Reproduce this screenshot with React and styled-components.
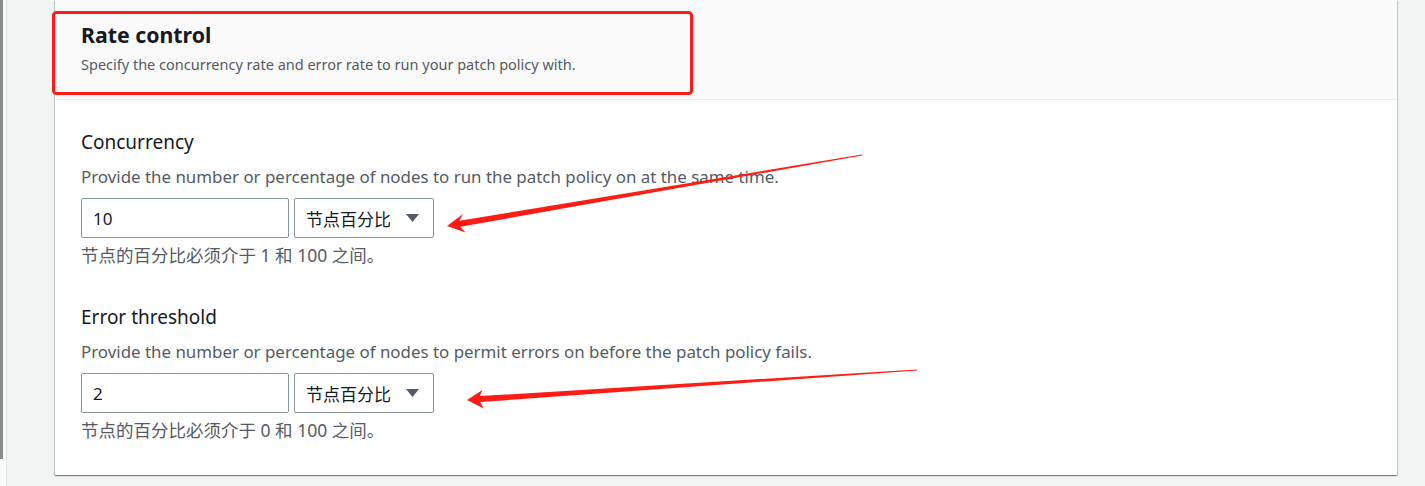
import styled, { createGlobalStyle } from 'styled-components';

const GlobalStyle = createGlobalStyle`
  html, body {
    margin: 0;
    padding: 0;
    background: #f2f3f3;
  }
  body {
    font-family: 'Noto Sans', 'Noto Sans CJK SC', sans-serif;
    color: #16191f;
  }
`;

const fields = [
  {
    label: 'Concurrency',
    description:
      'Provide the number or percentage of nodes to run the patch policy on at the same time.',
    value: '10',
    unit: '节点百分比',
    help: '节点的百分比必须介于 1 和 100 之间。',
  },
  {
    label: 'Error threshold',
    description:
      'Provide the number or percentage of nodes to permit errors on before the patch policy fails.',
    value: '2',
    unit: '节点百分比',
    help: '节点的百分比必须介于 0 和 100 之间。',
  },
];

function Field({ label, description, value, unit, help }) {
  return (
    <FieldGroup>
      <Label>{label}</Label>
      <Description>{description}</Description>
      <Controls>
        <Input>{value}</Input>
        <Select>
          <span>{unit}</span>
          <svg width='13' height='8' viewBox='0 0 13 8'>
            <path d='M0 0 H13 L6.5 8 Z' fill='#545b64' />
          </svg>
        </Select>
      </Controls>
      <Help>{help}</Help>
    </FieldGroup>
  );
}

function App() {
  return (
    <>
      <GlobalStyle />
      <Page>
        <LeftRail>
          <RailBar />
        </LeftRail>
        <Card>
          <Header>
            <Title>Rate control</Title>
            <Subtitle>
              Specify the concurrency rate and error rate to run your patch
              policy with.
            </Subtitle>
          </Header>
          <Body>
            {fields.map((f) => (
              <Field key={f.label} {...f} />
            ))}
          </Body>
        </Card>
        <Annotations width='1425' height='486' viewBox='0 0 1425 486'>
          <rect
            x='53.5'
            y='12.5'
            width='638'
            height='81'
            rx='3'
            fill='none'
            stroke='#ff1c14'
            strokeWidth='3'
          />
          <polygon
            fill='#ff1c14'
            points='447,226 463,214 459.3,220.8 862,154.6 862,155.4 460.3,226.8 465.5,232.5'
          />
          <polygon
            fill='#ff1c14'
            points='467,400 482.5,390 479.8,396.1 917,369.6 917,370.4 480.2,402.1 483.5,408.5'
          />
        </Annotations>
      </Page>
    </>
  );
}

const Page = styled.div`
  position: relative;
  display: flex;
  align-items: flex-start;
  width: 1425px;
  height: 486px;
  overflow: hidden;
`;

const LeftRail = styled.div`
  width: 6px;
  height: 486px;
  flex-shrink: 0;
  display: flex;
  background: #fafafa;
  border-right: 1px solid #e1e4e4;
`;

const RailBar = styled.div`
  width: 3px;
  height: 459px;
  background: #8a8a8a;
`;

const Card = styled.div`
  margin-left: 48px;
  width: 1342px;
  background: #fff;
  box-shadow: 0 1px 1px 0 rgba(0, 28, 36, 0.3),
    1px 1px 1px 0 rgba(0, 28, 36, 0.15), -1px 1px 1px 0 rgba(0, 28, 36, 0.15);
`;

const Header = styled.div`
  background: #fafafa;
  border-bottom: 1px solid #eaeded;
  padding: 22px 26px 25px;
  display: flex;
  flex-direction: column;
  gap: 6px;
`;

const Title = styled.h2`
  margin: 0;
  font-size: 21.3px;
  line-height: 26px;
  font-weight: 700;
  color: #16191f;
`;

const Subtitle = styled.p`
  margin: 0;
  font-size: 14.5px;
  line-height: 20px;
  color: #545b64;
`;

const Body = styled.div`
  padding: 30px 26px 35px;
  display: flex;
  flex-direction: column;
  gap: 40px;
`;

const FieldGroup = styled.div`
  display: flex;
  flex-direction: column;
`;

const Label = styled.div`
  font-size: 19px;
  line-height: 24px;
  color: #16191f;
`;

const Description = styled.div`
  margin-top: 12px;
  font-size: 16.9px;
  line-height: 22px;
  color: #545b64;
`;

const Controls = styled.div`
  margin-top: 10px;
  display: flex;
  gap: 5px;
`;

const Input = styled.div`
  box-sizing: border-box;
  width: 208px;
  height: 40px;
  border: 1px solid #879596;
  border-radius: 2px;
  padding: 0 11px;
  display: flex;
  align-items: center;
  font-size: 17px;
  color: #16191f;
`;

const Select = styled(Input)`
  width: 140px;
  justify-content: space-between;
  padding-right: 14px;
`;

const Help = styled.div`
  margin-top: 7px;
  font-size: 17.5px;
  line-height: 20px;
  color: #545b64;
`;

const Annotations = styled.svg`
  position: absolute;
  left: 0;
  top: 0;
  pointer-events: none;
`;

export default App;
